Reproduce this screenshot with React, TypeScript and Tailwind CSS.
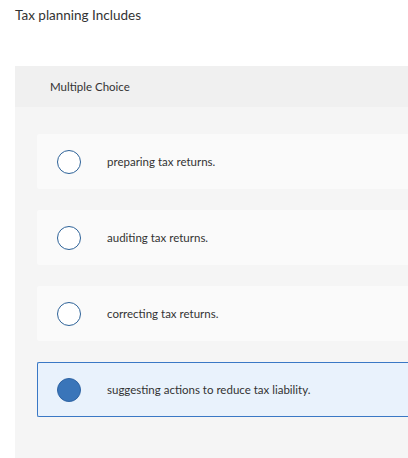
const options = [
  { label: "preparing tax returns.", selected: false },
  { label: "auditing tax returns.", selected: false },
  { label: "correcting tax returns.", selected: false },
  { label: "suggesting actions to reduce tax liability.", selected: true },
];

export default function App() {
  return (
    <div className="h-[458px] w-[408px] overflow-hidden bg-white font-['Lato',sans-serif] text-[#333]">
      <p className="pl-[15px] pt-[6px] text-[13.5px] leading-[18px]">Tax planning Includes</p>

      <section className="ml-[15px] mt-[42px] w-[420px] bg-[#f5f5f5] pb-[44px]">
        <div className="flex h-[41px] items-center bg-[#f0f0f0] pl-[35px] text-[11.5px]">
          Multiple Choice
        </div>

        <ul className="flex flex-col gap-[21px] pl-[22px] pt-[27px]">
          {options.map((opt) => (
            <li
              key={opt.label}
              className={
                opt.selected
                  ? "flex h-[55px] items-center rounded-l-[2px] border border-r-0 border-[#3a78c5] bg-[#e9f2fc] pl-[19px]"
                  : "flex h-[55px] items-center rounded-l-[2px] bg-[#fafafa] pl-[20px]"
              }
            >
              <span
                className={
                  opt.selected
                    ? "h-[24px] w-[24px] shrink-0 rounded-full border-[1.5px] border-[#2f64a3] bg-[#3a75b9]"
                    : "h-[24px] w-[24px] shrink-0 rounded-full border-[1.5px] border-[#2d6298] bg-white"
                }
              />
              <span className="pl-[26px] text-[11.5px]">{opt.label}</span>
            </li>
          ))}
        </ul>
      </section>
    </div>
  );
}
